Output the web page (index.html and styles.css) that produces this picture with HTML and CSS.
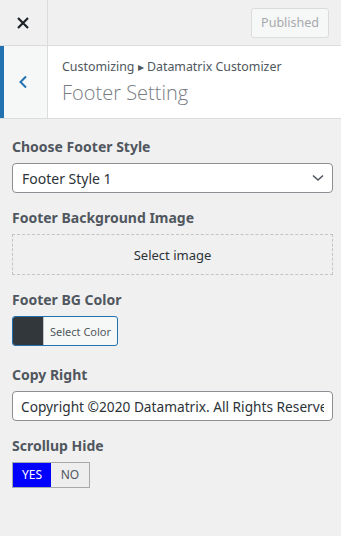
FILE: index.html
```html
<!DOCTYPE html>
<html lang="en">
<head>
  <meta charset="UTF-8">
  <title>Footer Setting - Customizer</title>
  <meta name="viewport" content="width=device-width, initial-scale=1">
  <link rel="stylesheet" href="styles.css">
</head>

<body>

  <!-- Barra superior -->
  <div class="topbar">
    <button class="close-btn" title="Close">
      <svg width="12" height="12" viewBox="0 0 12 12"><path d="M1 1L11 11M11 1L1 11" stroke="#1d2327" stroke-width="2.2"/></svg>
    </button>
    <div class="publish-area">
      <button class="publish-btn" disabled>Published</button>
    </div>
  </div>

  <!-- Cabeçalho da secção -->
  <div class="section-head">
    <button class="back-btn" title="Back">
      <svg width="10" height="14" viewBox="0 0 10 14"><path d="M8 1.5L2.5 7L8 12.5" fill="none" stroke="#2271b1" stroke-width="2"/></svg>
    </button>
    <div class="titles">
      <div class="crumb">Customizing &#9656; Datamatrix Customizer</div>
      <h3>Footer Setting</h3>
    </div>
  </div>

  <!-- Controlos -->
  <div class="controls">
    <div class="control">
      <label class="control-title">Choose Footer Style</label>
      <div class="select-wrap">
        <select>
          <option>Footer Style 1</option>
          <option>Footer Style 2</option>
        </select>
        <svg class="arrow" width="12" height="8" viewBox="0 0 12 8"><path d="M1 1.5L6 6L11 1.5" fill="none" stroke="#50575e" stroke-width="1.6"/></svg>
      </div>
    </div>

    <div class="control">
      <label class="control-title">Footer Background Image</label>
      <button class="upload-btn">Select image</button>
    </div>

    <div class="control control-color">
      <label class="control-title">Footer BG Color</label>
      <button class="color-btn"><span class="swatch"></span><span class="color-text">Select Color</span></button>
    </div>

    <div class="control">
      <label class="control-title">Copy Right</label>
      <input type="text" class="text-input" value="Copyright ©2020 Datamatrix. All Rights Reserved.">
    </div>

    <div class="control">
      <label class="control-title">Scrollup Hide</label>
      <div class="switch">
        <span class="on">YES</span><span>NO</span>
      </div>
    </div>
  </div>

</body>
</html>
```

FILE: styles.css
```css
body {
  margin: 0;
  font-family: "Noto Sans", "Open Sans", sans-serif;
  background: #f0f0f1;
  color: #3c434a;
  width: 341px;
  height: 536px;
  overflow: hidden;
}

button {
  font-family: inherit;
  cursor: pointer;
}

/* Barra superior */
.topbar {
  display: flex;
  height: 45px;
  border-bottom: 1px solid #dcdcde;
}

.close-btn {
  width: 48px;
  border: none;
  border-right: 1px solid #dcdcde;
  background: transparent;
  display: flex;
  align-items: center;
  justify-content: center;
  padding: 0 2px 0 0;
}

.publish-area {
  flex: 1;
  display: flex;
  justify-content: flex-end;
  align-items: center;
  padding-right: 12px;
}

.publish-btn {
  height: 30px;
  padding: 0 9px;
  font-size: 12.5px;
  color: #a7aaad;
  background: #f6f7f7;
  border: 1px solid #dcdcde;
  border-radius: 3px;
}

/* Cabeçalho da secção */
.section-head {
  display: flex;
  height: 72px;
  background: #fff;
  border-bottom: 1px solid #dcdcde;
}

.back-btn {
  width: 48px;
  border: none;
  border-left: 4px solid #2271b1;
  border-right: 1px solid #dcdcde;
  background: #f6f7f7;
  display: flex;
  align-items: center;
  justify-content: center;
  padding: 0 6px 0 0;
}

.titles {
  padding: 11px 0 0 14px;
}

.crumb {
  font-size: 12.4px;
  line-height: 20px;
  color: #50575e;
}

.titles h3 {
  margin: 2px 0 0;
  font-family: "Open Sans", sans-serif;
  font-size: 20px;
  font-weight: 300;
  line-height: 28px;
  color: #787c82;
}

/* Controlos */
.controls {
  padding: 18px 8px 0 12px;
}

.control {
  margin-bottom: 15px;
}

.control-color {
  margin-bottom: 19px;
}

.control-title {
  display: block;
  font-size: 14px;
  font-weight: bold;
  line-height: 20px;
  color: #50575e;
  margin-bottom: 6px;
}

.select-wrap {
  position: relative;
}

select {
  width: 100%;
  height: 30px;
  padding: 0 24px 0 9px;
  font-family: inherit;
  font-size: 14px;
  color: #2c3338;
  background: #fff;
  border: 1px solid #8c8f94;
  border-radius: 4px;
  appearance: none;
}

.select-wrap .arrow {
  position: absolute;
  right: 9px;
  top: 11px;
  pointer-events: none;
}

.upload-btn {
  width: 100%;
  height: 41px;
  background: transparent;
  border: 1px dashed #c3c4c7;
  font-size: 13px;
  color: #2c3338;
}

.color-btn {
  display: flex;
  height: 30px;
  padding: 0;
  border: 1px solid #2271b1;
  border-radius: 3px;
  background: #f6f7f7;
  overflow: hidden;
}

.swatch {
  width: 30px;
  height: 100%;
  background: #32373c;
  border-right: 1px solid #c3c4c7;
}

.color-text {
  align-self: center;
  padding: 0 6px;
  font-size: 11px;
  color: #50575e;
}

.text-input {
  box-sizing: border-box;
  width: 100%;
  height: 30px;
  padding: 0 8px;
  font-family: inherit;
  font-size: 13.7px;
  color: #2c3338;
  background: #fff;
  border: 1px solid #8c8f94;
  border-radius: 4px;
}

.switch {
  display: inline-flex;
  border: 1px solid #a7aaad;
  background: #eee;
}

.switch span {
  width: 38px;
  height: 24px;
  line-height: 24px;
  text-align: center;
  font-size: 12px;
  color: #50575e;
}

.switch .on {
  background: #0000ff;
  color: #fff;
}
```
